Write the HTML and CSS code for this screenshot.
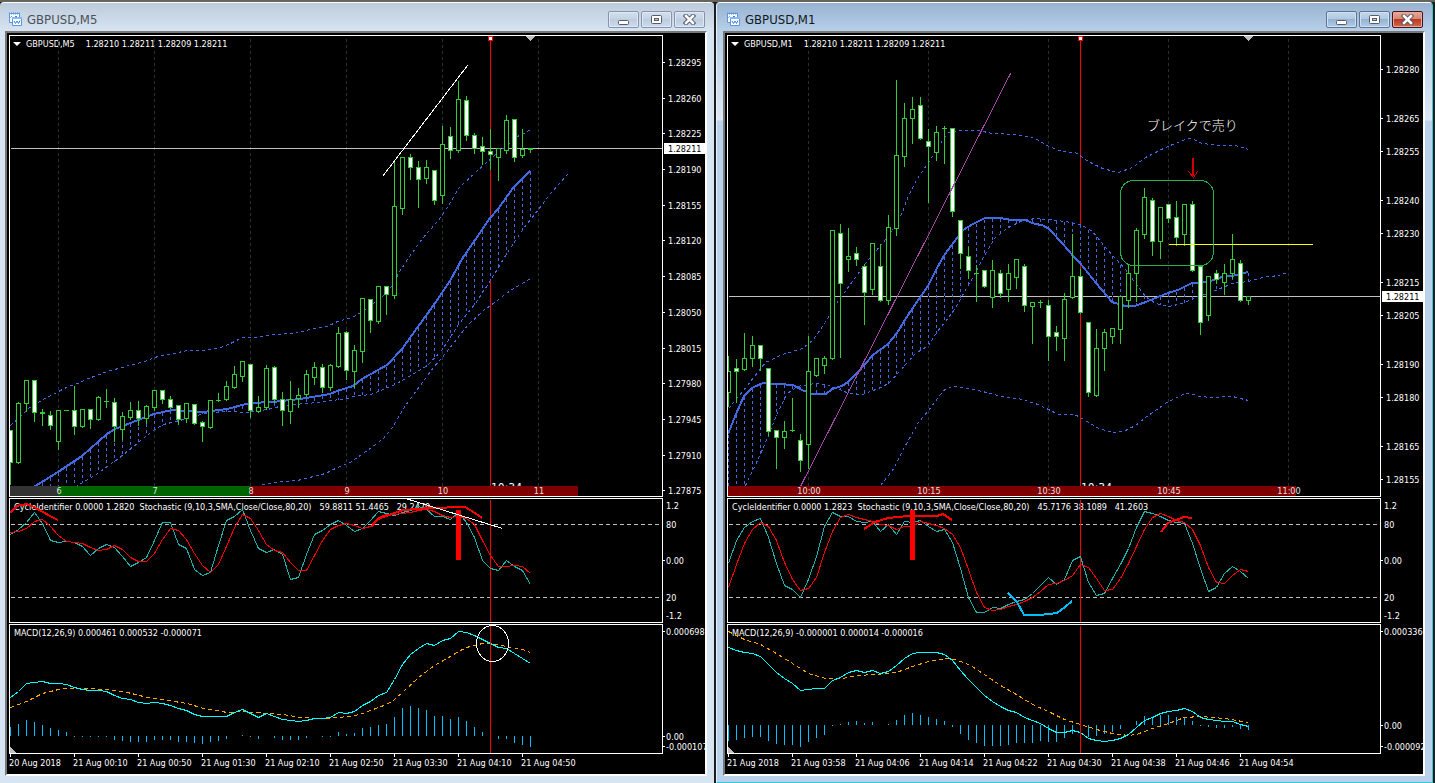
FILE: index.html
```html
<!DOCTYPE html>
<html lang="ja">
<head>
<meta charset="utf-8">
<title>GBPUSD charts</title>
<link rel="stylesheet" href="styles.css">
</head>
<body>
<svg class="defs" aria-hidden="true">
  <symbol id="icon-chart" viewBox="0 0 15 15">
    <path d="M1.5 1.5h10v9h-10z" fill="#fff" stroke="#5a96e8"/>
    <path d="M1 1.5h11" stroke="#5a96e8" stroke-width="2" stroke-dasharray="1 1"/>
    <path d="M2.500 5.500l1-1 1 1M7 4.500h2" stroke="#3f7fe0" fill="none"/>
    <path d="M4.500 5.500h9v8h-9z" fill="#fff" stroke="#5a96e8"/>
    <path d="M4 6h10" stroke="#8cb6f2" stroke-width="2"/>
    <path d="M6 9l1.500 2.500L9 9l1.500 2.500L12 8.500" stroke="#3f7fe0" fill="none"/>
  </symbol>
  <symbol id="icon-min" viewBox="0 0 13 11">
    <rect x="1.500" y="6.500" width="10" height="4" rx="1" fill="#fff" stroke="#565a6c"/>
  </symbol>
  <symbol id="icon-max" viewBox="0 0 13 11">
    <rect x="1.500" y="1.500" width="10" height="8" rx="1" fill="#fff" stroke="#565a6c"/>
    <rect x="4.500" y="4.500" width="4" height="2" fill="#b8cadc" stroke="#565a6c"/>
  </symbol>
  <symbol id="icon-close" viewBox="0 0 13 11">
    <path d="M3 2l7 7M10 2L3 9" stroke="#565a6c" stroke-width="4.500" stroke-linecap="square"/>
    <path d="M3 2l7 7M10 2L3 9" stroke="#fff" stroke-width="2.500" stroke-linecap="square"/>
  </symbol>
</svg>
<main class="desktop">
  <section class="window window-m5" aria-label="GBPUSD,M5">
    <header class="titlebar">
      <svg class="title-icon" aria-hidden="true"><use href="#icon-chart"/></svg>
      <h1 class="title">GBPUSD,M5</h1>
      <button class="win-button" type="button" aria-label="Minimize"><svg><use href="#icon-min"/></svg></button>
      <button class="win-button" type="button" aria-label="Maximize"><svg><use href="#icon-max"/></svg></button>
      <button class="win-button win-close" type="button" aria-label="Close"><svg><use href="#icon-close"/></svg></button>
    </header>
    <div class="client">
      <div class="panels" data-chart="m5">
        <div class="panel">
          <p class="caption caption-main"><span class="marker"></span><span class="symbol">GBPUSD,M5</span><span>1.28210 1.28211 1.28209 1.28211</span></p>
          <svg class="plot" data-panel="main"></svg>
        </div>
        <svg class="axis" data-axis="main"></svg>
        <div class="panel">
          <p class="caption"><span>CycleIdentifier 0.0000 1.2820  Stochastic (9,10,3,SMA,Close/Close,80,20)</span><span>59.8811 51.4465   29.2479</span></p>
          <svg class="plot" data-panel="stoch"></svg>
        </div>
        <svg class="axis" data-axis="stoch"></svg>
        <div class="panel">
          <p class="caption">MACD(12,26,9) 0.000461 0.000532 -0.000071</p>
          <svg class="plot" data-panel="macd"></svg>
        </div>
        <svg class="axis" data-axis="macd"></svg>
      </div>
      <ol class="times">
        <li>20 Aug 2018</li><li>21 Aug 00:10</li><li>21 Aug 00:50</li><li>21 Aug 01:30</li><li>21 Aug 02:10</li><li>21 Aug 02:50</li><li>21 Aug 03:30</li><li>21 Aug 04:10</li><li>21 Aug 04:50</li>
      </ol>
    </div>
  </section>
  <section class="window window-m1 active" aria-label="GBPUSD,M1">
    <header class="titlebar">
      <svg class="title-icon" aria-hidden="true"><use href="#icon-chart"/></svg>
      <h1 class="title">GBPUSD,M1</h1>
      <button class="win-button" type="button" aria-label="Minimize"><svg><use href="#icon-min"/></svg></button>
      <button class="win-button" type="button" aria-label="Maximize"><svg><use href="#icon-max"/></svg></button>
      <button class="win-button win-close" type="button" aria-label="Close"><svg><use href="#icon-close"/></svg></button>
    </header>
    <div class="client">
      <div class="panels" data-chart="m1">
        <div class="panel">
          <p class="caption caption-main"><span class="marker"></span><span class="symbol">GBPUSD,M1</span><span>1.28210 1.28211 1.28209 1.28211</span></p>
          <svg class="plot" data-panel="main"></svg>
        </div>
        <svg class="axis" data-axis="main"></svg>
        <div class="panel">
          <p class="caption"><span>CycleIdentifier 0.0000 1.2823  Stochastic (9,10,3,SMA,Close/Close,80,20)</span><span>45.7176 38.1089   41.2603</span></p>
          <svg class="plot" data-panel="stoch"></svg>
        </div>
        <svg class="axis" data-axis="stoch"></svg>
        <div class="panel">
          <p class="caption">MACD(12,26,9) -0.000001 0.000014 -0.000016</p>
          <svg class="plot" data-panel="macd"></svg>
        </div>
        <svg class="axis" data-axis="macd"></svg>
      </div>
      <ol class="times">
        <li>21 Aug 2018</li><li>21 Aug 03:58</li><li>21 Aug 04:06</li><li>21 Aug 04:14</li><li>21 Aug 04:22</li><li>21 Aug 04:30</li><li>21 Aug 04:38</li><li>21 Aug 04:46</li><li>21 Aug 04:54</li>
      </ol>
    </div>
  </section>
</main>
<script src="chart.js"></script>
</body>
</html>
```

FILE: styles.css
```css
* { box-sizing: border-box; }

body {
  margin: 0;
  background: #1c1c1c;
  font-family: "DejaVu Sans Condensed", "Noto Sans", "Noto Sans CJK JP", sans-serif;
}

.defs { display: none; }

.desktop {
  display: grid;
  grid-template-columns: minmax(0, 714fr) minmax(0, 717fr);
  grid-template-rows: minmax(0, 1fr);
  gap: 2px;
  height: 100vh;
  min-height: 600px;
  padding-right: 2px;
  border-top: 2px solid #66645f;
}

.window {
  display: flex;
  flex-direction: column;
  min-width: 0;
  border-top: 1px solid #fff;
  border-radius: 4px 4px 0 0;
}

.window-m5 {
  padding: 0 7px 7px 5px;
  background: linear-gradient(#bccbda, #d7e4f2 28px);
}

.window-m1 {
  padding: 0 7px 6px 6px;
  border-left: 1px solid #e8f1fa;
  border-right: 1px solid #2ec8dc;
  border-bottom: 1px solid #2ec8dc;
  background: linear-gradient(#98b3d1, #b7cfe8 28px, #dce8f5 117px, #b9d1ea 118px);
}

.titlebar {
  display: flex;
  flex: none;
  align-items: center;
  gap: 2px;
  height: 28px;
  padding: 5px 2px 0 3px;
}

.title-icon { width: 15px; height: 15px; }

.title {
  flex: 1;
  margin: 0 0 0 2px;
  color: #4b5157;
  font-size: 13px;
  font-weight: 400;
  line-height: 16px;
}

.active .title { color: #101820; }

.win-button {
  display: grid;
  place-items: center;
  width: 31px;
  height: 17px;
  padding: 0;
  border: 1px solid #8593ad;
  border-radius: 2px;
  background: linear-gradient(#d3dfec, #c3d2e2 50%, #bccddf 50%, #cddaea);
  box-shadow: inset 0 0 0 1px #dfe9f4;
}

.win-button svg { width: 13px; height: 11px; }

.active .win-button {
  border-color: #5f7494;
  background: linear-gradient(#c5d8ec, #aec6df 50%, #94b2d2 50%, #b2cce6);
  box-shadow: inset 0 0 0 1px #cfe0f1;
}

.active .win-close {
  border-color: #43141a;
  background: linear-gradient(#e9a797, #d98372 50%, #b83a20 50%, #d2694c);
  box-shadow: inset 0 0 0 1px #e5aa9c;
}

.client {
  display: flex;
  flex: 1;
  flex-direction: column;
  min-height: 0;
  padding: 2px 0 0 2px;
  border: 2px solid #fff;
  border-top-color: #777;
  border-left-color: #777;
  background: #000;
  color: #fff;
  font-size: 9px;
}

.panels {
  display: grid;
  flex: 1;
  grid-template-columns: minmax(0, 1fr) 42px;
  grid-template-rows: minmax(0, 462fr) minmax(0, 125fr) minmax(0, 130fr);
  row-gap: 1px;
  min-height: 0;
}

.panel {
  display: grid;
  grid-template: minmax(0, 1fr) / minmax(0, 1fr);
  border: 1px solid #fff;
  overflow: hidden;
}

.plot, .axis {
  width: 100%;
  height: 100%;
  overflow: hidden;
}

.plot { grid-area: 1 / 1; }

.plot text, .axis text { fill: #fff; font-size: 9px; }

.plot .note { font: 300 13px "Noto Sans CJK JP", sans-serif; }
.plot .clock { font-size: 12px; }
.plot .hour { text-anchor: middle; fill: #e0e0e0; }
.axis .now { fill: #000; }

.caption {
  display: flex;
  grid-area: 1 / 1;
  gap: 8px;
  margin: 0;
  padding: 2px 0 0 4px;
  line-height: 12px;
  white-space: pre;
}

.caption-main {
  gap: 5px;
  padding-left: 3px;
}

.symbol { margin-right: 6px; }

.marker {
  height: 0;
  margin: 4px 0 0;
  border: 4px solid transparent;
  border-top-color: #fff;
  border-bottom: 0;
}

.times {
  display: flex;
  flex: none;
  height: 20px;
  margin: 0;
  padding: 0;
  list-style: none;
  line-height: 18px;
  overflow: hidden;
}

.times li {
  flex: none;
  width: 64px;
  white-space: nowrap;
  background: linear-gradient(#fff, #fff) 1px 0 / 1px 3px no-repeat;
}
```

FILE: chart.js
```js
// Coordinates are surface pixels; each panel subtracts its own origin.
const STEP = 8;
const TOP = { main: 36, stoch: 499, macd: 625 };
const BLUE = '#4169e1';

const charts = {
  m5: {
    left: 10,
    grid: [58, 154, 250, 346, 442, 538],
    hours: [[58, '6'], [154, '7'], [250, '8'], [346, '9'], [442, '10'], [538, '11']],
    strips: [[10, 58, '#333'], [58, 250, '#006400'], [250, 578, '#800000']],
    now: 148, cursor: 490,
    // high, body top, body bottom, low, 1 = falling candle
    candles: [
      [430,430,462,483,1],[401,403,462,462,0],[379,380,403,410,0],[380,380,412,420,1],[408,412,413,424,1],[410,415,425,428,1],
      [410,410,441,448,0],[410,410,410,410,0],[385,410,426,433,1],[408,409,426,426,0],[409,409,419,427,1],[395,397,419,419,0],
      [388,401,401,406,0],[397,402,426,440,1],[411,416,429,438,0],[401,410,417,418,0],[400,410,418,424,1],[404,406,418,422,0],
      [390,390,407,409,0],[389,390,399,402,1],[395,399,407,407,1],[405,405,419,423,1],[403,403,418,421,0],[403,404,423,423,1],
      [420,422,426,440,1],[400,400,427,427,0],[392,400,400,400,0],[380,386,399,399,0],[365,374,387,387,0],[361,361,376,380,0],
      [364,364,410,416,1],[395,407,411,411,0],[364,368,407,408,0],[365,367,399,401,1],[391,399,410,424,1],[380,399,411,422,0],
      [387,395,398,406,0],[369,374,394,395,0],[361,367,377,383,0],[363,367,387,391,1],[363,365,387,389,0],[326,333,366,366,0],
      [330,332,370,378,1],[344,350,371,386,0],[297,298,351,361,0],[299,299,320,331,1],[285,286,321,322,0],[285,286,294,313,1],
      [160,206,295,297,0],[157,157,208,213,0],[153,157,167,178,1],[160,167,179,206,1],[159,167,178,182,0],[170,170,200,203,1],
      [125,144,195,202,0],[126,136,150,157,1],[80,99,150,151,0],[95,100,135,139,1],[132,135,148,152,1],[136,146,151,163,1],
      [128,151,154,168,1],[147,148,157,179,0],[114,120,150,152,0],[118,119,157,160,1],[128,149,155,156,0],[148,148,149,151,0]],
    upper: '10,425 22,414 28,408 39,401 58,391 68,386 77,383 88,378 107,371 125,366 144,361 160,355 173,353 187,350 203,350 220,347 230,343 242,337 257,337 273,334 293,333 310,329 327,326 337,321 352,317 365,309 382,296 392,285 398,273 407,259 422,238 438,220 450,202 458,188 477,170 493,156 510,142 517,136 525,132 530,129',
    mid: '10,501 37,485 58,472 82,456 107,434 115,429 133,422 154,414 172,410 187,411 203,412 227,409 250,403 273,402 300,399 330,394 337,391 353,386 362,379 387,365 402,349 412,335 433,306 450,281 462,259 473,243 490,218 498,209 513,188 530,171',
    shifted: '10,530 77,485 97,473 118,458 133,446 154,429 163,424 187,418 203,413 227,411 247,412 267,409 283,405 317,402 347,398 352,396 370,394 395,384 410,375 427,365 442,349 458,324 475,303 490,280 507,252 523,228 538,209 550,193 568,173',
    lower: '262,484 273,482 297,480 325,473 337,467 348,463 367,450 383,438 392,427 405,405 422,382 433,367 445,353 467,325 483,310 490,305 510,290 530,278',
    prices: [['1.28295',62],['1.28260',98],['1.28225',133],['1.28190',169],['1.28155',205],['1.28120',240],['1.28085',276],['1.28050',312],['1.28015',348],['1.27980',383],['1.27945',419],['1.27910',455],['1.27875',490]],
    main: [['line', '382,176 467,65', '#fff', 1]],
    fast: [534,529,522,512,523,540,542,541,542,546,555,548,544,547,556,566,562,557,540,522,522,544,548,569,575,572,545,520,516,509,530,548,552,549,554,579,577,554,534,530,524,520,525,531,528,520,511,513,515,512,510,506,509,516,516,519,512,522,537,560,568,570,560,566,570,584],
    slow: [532,531,528,521,519,526,535,541,542,543,547,550,549,545,549,557,561,561,553,539,528,530,539,553,565,572,564,546,527,514,518,530,544,550,552,562,570,570,555,540,529,525,523,525,528,526,517,514,514,513,512,510,509,511,515,517,516,518,524,540,555,566,566,565,566,573],
    signalBar: 456,
    stoch: [['line', '10,513 17,506 26,504 34,507 50,516 58,520', 'red', 2], ['line', '371,527 378,519 392,514 403,510 418,509 430,508 442,508 453,507 465,507 475,513 482,518', 'red', 2], ['line', '402,497 502,528', '#fff', 1]],
    macd: [697,691,683,682,681,683,683,684,687,689,690,690,691,695,698,699,702,703,702,703,705,708,710,714,716,716,716,716,712,709,713,717,713,716,719,720,721,720,718,718,717,712,713,711,705,701,695,692,679,664,654,648,643,645,640,638,631,632,635,639,643,647,648,653,658,663],
    signal: '10,707 26,701 42,693 58,689 67,688 83,688 107,689 127,692 147,697 167,700 187,703 203,708 227,712 243,711 267,713 283,714 300,717 323,718 338,717 355,715 362,713 370,710 378,707 386,704 394,699 402,692 418,677 434,665 450,656 458,651 466,647 482,643 490,643 506,646 522,649 530,652',
    zero: 736,
    bars: [727,724,720,722,725,728,730,732,737,737,737,737,737,740,741,742,742,742,740,740,740,742,742,743,744,742,741,739,0,735,737,739,0,738,740,740,740,738,0,737,737,732,734,733,728,727,725,724,717,708,706,708,710,716,716,719,717,721,727,732,737,739,739,743,745,747],
    macdAxis: [['0.000698',631],['0.00',736],['-0.000107',746]]
  },
  m1: {
    left: 728,
    grid: [808, 928, 1048, 1168, 1288],
    hours: [[808, '10:00'], [928, '10:15'], [1048, '10:30'], [1168, '10:45'], [1288, '11:00']],
    strips: [[728, 1296, '#800000']],
    now: 296, cursor: 1080,
    candles: [
      [355,371,392,405,0],[358,368,371,401,1],[332,358,369,369,0],[335,345,358,365,0],[345,345,358,369,1],[368,368,431,434,1],
      [430,430,437,467,1],[420,431,437,447,0],[397,430,430,430,0],[433,440,460,470,1],[335,371,444,467,0],[358,358,375,375,0],
      [355,358,365,372,0],[230,230,358,358,0],[223,233,283,356,1],[227,256,259,270,0],[246,253,259,264,1],[263,266,292,323,1],
      [243,243,289,293,0],[243,266,300,300,1],[214,227,300,303,0],[79,155,228,234,0],[102,118,156,165,0],[96,109,118,142,0],
      [96,105,138,138,1],[128,141,146,201,1],[125,132,152,159,0],[125,128,128,162,0],[128,128,211,215,1],[220,220,253,267,1],
      [246,256,270,277,1],[264,273,273,300,0],[270,270,286,286,1],[259,270,297,306,0],[269,273,293,296,1],[263,273,289,300,0],
      [259,259,277,287,0],[263,266,305,310,1],[302,302,306,342,0],[299,302,302,306,0],[299,305,336,359,1],[325,332,336,349,1],
      [292,299,338,359,0],[233,276,297,297,0],[268,276,312,312,1],[322,322,392,395,1],[328,348,395,395,0],[328,332,348,369,0],
      [328,328,336,342,0],[296,296,329,342,0],[264,273,300,306,0],[227,230,273,300,0],[187,197,234,237,0],[197,200,241,254,1],
      [207,207,241,257,0],[204,204,218,221,1],[200,217,237,244,1],[204,204,234,244,0],[200,204,270,270,1],[266,266,322,333,1],
      [276,276,315,319,0],[269,273,279,282,1],[263,273,282,293,0],[233,259,273,277,0],[259,263,300,300,1],[296,296,300,303,0]],
    upper: '728,408 743,390 765,362 782,354 802,348 812,340 825,322 830,313 838,300 852,281 868,259 882,243 892,230 902,212 908,195 917,178 928,162 942,140 948,132 958,130 978,130 992,133 1015,134 1035,138 1048,146 1062,151 1075,152 1088,161 1102,168 1118,172 1132,167 1145,157 1165,147 1187,138 1193,139 1202,143 1218,145 1235,145 1248,149',
    mid: '728,434 736,414 744,396 752,388 763,383 793,385 802,390 812,394 826,394 832,389 842,386 848,382 858,372 873,355 888,344 897,333 908,315 928,286 937,268 945,254 963,230 973,224 985,218 1000,218 1012,220 1025,220 1035,224 1042,225 1049,229 1062,243 1074,257 1080,263 1096,283 1112,302 1125,306 1135,306 1148,301 1168,293 1178,290 1192,283 1208,282 1222,277 1238,275 1248,272',
    shifted: '728,530 745,485 758,458 768,435 778,410 787,393 797,386 815,383 828,385 842,390 848,393 862,394 878,388 888,383 900,370 915,353 928,345 937,331 952,312 962,295 975,272 985,253 995,237 1008,227 1022,220 1035,218 1048,219 1065,221 1080,224 1092,231 1105,247 1115,258 1125,269 1133,280 1145,296 1155,303 1168,306 1182,303 1198,296 1215,290 1232,283 1248,281 1262,277 1278,275 1288,272',
    lower: '880,485 892,470 905,445 918,422 928,410 943,390 952,386 962,387 982,391 1005,397 1018,398 1035,403 1048,409 1058,414 1074,414 1080,417 1098,428 1113,432 1125,430 1135,425 1145,417 1168,401 1185,393 1193,394 1198,396 1212,397 1232,396 1248,400',
    prices: [['1.28280',69],['1.28265',118],['1.28255',151],['1.28240',200],['1.28230',233],['1.28215',282],['1.28205',315],['1.28190',364],['1.28180',397],['1.28165',446],['1.28155',479]],
    main: [
      ['line', '800,486 1010,73', '#a349a4', 1],
      ['line', '1168,244 1312,244', '#ff0', 1],
      ['box', 1120, 180, 93, 85, 13, '#22b14c'],
      ['line', '1193,158 1193,176', '#d40000', 2], ['line', '1188,171 1193,177 1197,171', '#d40000', 1],
      ['note', 1147, 130, 'ブレイクで売り']
    ],
    fast: [563,540,527,521,518,537,563,585,589,597,579,556,526,512,516,516,521,522,521,531,524,534,521,522,520,526,531,529,542,568,597,612,612,607,608,604,601,599,593,585,577,584,579,560,556,582,595,593,578,564,548,527,511,513,516,520,522,523,543,568,591,587,573,566,571,578],
    slow: [587,564,543,529,522,526,540,562,579,590,588,577,552,531,517,514,517,519,521,524,525,529,526,526,521,523,525,528,534,547,569,592,607,610,609,606,604,601,597,591,584,583,580,575,564,567,578,590,589,578,563,546,529,517,513,516,520,522,529,545,567,582,583,575,569,571],
    signalBar: 910,
    stoch: [['line', '864,529 875,522 888,518 908,516 937,516 943,514 952,520', 'red', 2], ['line', '1161,532 1168,523 1184,517 1192,518', 'red', 2], ['line', '1008,593 1017,602 1024,615 1040,615 1057,613 1065,607 1072,601', '#00bfff', 2]],
    macd: [647,650,652,653,656,664,672,678,683,690,689,688,688,680,677,672,670,672,670,673,671,665,658,653,652,652,652,654,660,670,679,687,695,701,706,710,712,717,720,723,728,732,732,730,732,738,740,741,740,738,734,727,720,717,713,711,710,708,711,717,719,720,721,721,724,726],
    signal: '728,631 744,639 760,644 776,653 792,663 808,673 825,678 842,678 856,675 875,674 896,672 912,666 928,661 945,658 955,659 970,665 984,674 1000,685 1016,694 1032,704 1048,711 1064,719 1080,724 1096,729 1112,733 1128,735 1136,734 1152,728 1168,723 1184,717 1200,716 1224,718 1248,722',
    zero: 725,
    bars: [741,740,738,737,737,741,744,745,745,747,742,738,735,726,724,722,721,723,722,0,724,720,715,713,715,717,719,721,727,734,740,743,746,746,746,745,743,743,743,741,742,742,738,734,734,737,736,734,732,729,0,721,716,717,715,715,717,717,721,726,727,728,728,727,729,730],
    macdAxis: [['0.000336',631],['0.00',725],['-0.000092',746]]
  }
};

const pairs = s => s.split(' ').map(p => p.split(',').map(Number));

function line(points, color, width = 1, dash = '') {
  const shift = width % 2 ? 0.5 : 0;
  const pts = pairs(points).map(([x, y]) => `${x + shift},${y + shift}`).join(' ');
  return `<polyline points="${pts}" fill="none" stroke="${color}" stroke-width="${width}"${dash ? ` stroke-dasharray="${dash}"` : ''}/>`;
}

const rect = (x, y, w, h, fill) => `<rect x="${x}" y="${y}" width="${w}" height="${h}" fill="${fill}"/>`;
const vline = (x, y1, y2, color, dash) => line(`${x},${y1} ${x},${y2}`, color, 1, dash);

function at(points, x) {
  for (let i = 1; i < points.length; i++) {
    const [x0, y0] = points[i - 1], [x1, y1] = points[i];
    if (x >= x0 && x <= x1) return Math.round(y0 + (y1 - y0) * (x - x0) / (x1 - x0));
  }
  return null;
}

function extras(items) {
  return items.map(([kind, ...a]) => {
    if (kind === 'line') return line(...a);
    if (kind === 'box') return `<rect x="${a[0] + 0.5}" y="${a[1] + 0.5}" width="${a[2]}" height="${a[3]}" rx="${a[4]}" fill="none" stroke="${a[5]}"/>`;
    return `<text class="note" x="${a[0]}" y="${a[1]}">${a[2]}</text>`;
  }).join('');
}

function series(c, values) {
  return values.map((y, i) => `${c.left + i * STEP},${y}`).join(' ');
}

function drawMain(c) {
  const end = c.left + 652;
  let s = c.grid.map(x => vline(x, 38, 486, '#22332e', '3 3')).join('');
  s += line(`${c.left},${c.now} ${end},${c.now}`, '#c0c0c0');
  s += vline(c.cursor, 37, 486, 'red');
  const mid = pairs(c.mid), shifted = pairs(c.shifted);
  c.candles.forEach((_, i) => {
    const x = c.left + i * STEP, a = at(mid, x), b = at(shifted, x);
    if (a === null || b === null) return;
    s += vline(x, Math.min(a, b), Math.max(a, b), '#000') + vline(x, Math.min(a, b), Math.max(a, b), BLUE, '3 3');
  });
  s += [c.upper, c.lower, c.shifted].map(p => line(p, BLUE, 1, '3 3')).join('');
  s += line(c.mid, BLUE, 2);
  c.candles.forEach(([h, t, b, l, falling], i) => {
    const x = c.left + i * STEP;
    if (l > h) s += vline(x, h, l + 1, '#32cd32');
    if (t === b) s += rect(x - 2, t, 5, 1, '#32cd32');
    else s += `<rect x="${x - 1.5}" y="${t + 0.5}" width="4" height="${b - t}" fill="${falling ? '#fff' : '#000'}" stroke="#32cd32"/>`;
  });
  s += extras(c.main);
  s += `<text class="clock" x="${c.cursor + 1}" y="492">10:34</text>`;
  s += rect(c.left, 486, 652, 10, '#000');
  s += c.strips.map(([a, b, color]) => rect(a, 486, b - a, 10, color)).join('');
  s += c.hours.map(([x, label]) => `<text class="hour" x="${x + 1}" y="494">${label}</text>`).join('');
  s += rect(c.cursor - 2, 36, 5, 5, 'red') + rect(c.cursor - 1, 37, 3, 3, '#fff');
  const tip = c.left + 520;
  s += `<path d="M${tip - 4} 36h9l-4.500 5z" fill="#c0c0c0"/>`;
  return s;
}

function drawStoch(c) {
  const end = c.left + 652;
  return line(`${c.left},524 ${end},524`, '#c0c0c0', 1, '4 3') + line(`${c.left},597 ${end},597`, '#c0c0c0', 1, '4 3')
    + vline(c.cursor, 499, 622, 'red')
    + line(series(c, c.fast), '#20b2aa') + line(series(c, c.slow), 'red')
    + rect(c.signalBar, 510, 5, 50, 'red') + extras(c.stoch);
}

function drawMacd(c) {
  let s = '';
  c.bars.forEach((y, i) => {
    if (!y) return;
    s += rect(c.left + i * STEP, Math.min(y, c.zero), 1, Math.max(1, Math.abs(y - c.zero)), '#00bfff');
  });
  s += line(c.signal, 'orange', 1, '4 3') + line(series(c, c.macd), '#0ff') + vline(c.cursor, 625, 753, 'red');
  if (c === charts.m5) s += '<ellipse cx="492.500" cy="643.500" rx="16" ry="18" fill="none" stroke="#fff"/>';
  return s + `<path d="M${c.left} 747l6 6h-6z" fill="#c0c0c0"/>`;
}

function drawAxis(labels, top, x) {
  return labels.map(([label, y, tick]) =>
    (tick === false ? '' : rect(0, y - top, 2, 1, '#fff')) + `<text x="${x}" y="${y - top + 4}">${label}</text>`).join('');
}

const draw = { main: drawMain, stoch: drawStoch, macd: drawMacd };

document.querySelectorAll('.panels').forEach(el => {
  const c = charts[el.dataset.chart];
  el.querySelectorAll('.plot').forEach(svg => {
    const name = svg.dataset.panel;
    svg.innerHTML = `<g shape-rendering="crispEdges" transform="translate(${-c.left} ${-TOP[name]})">${draw[name](c)}</g>`;
  });
  const axis = name => el.querySelector(`[data-axis=${name}]`);
  axis('main').innerHTML = drawAxis(c.prices, 35, 5) + rect(1, c.now - 35 - 5, 41, 11, '#fff')
    + `<text class="now" x="5" y="${c.now - 35 + 4}">1.28211</text>`;
  axis('stoch').innerHTML = drawAxis([['1.2', 505, false], ['80', 524, false], ['0.00', 560], ['20', 597, false], ['-1.2', 615, false]], 498, 3);
  axis('macd').innerHTML = drawAxis(c.macdAxis, 624, 3);
});
```
